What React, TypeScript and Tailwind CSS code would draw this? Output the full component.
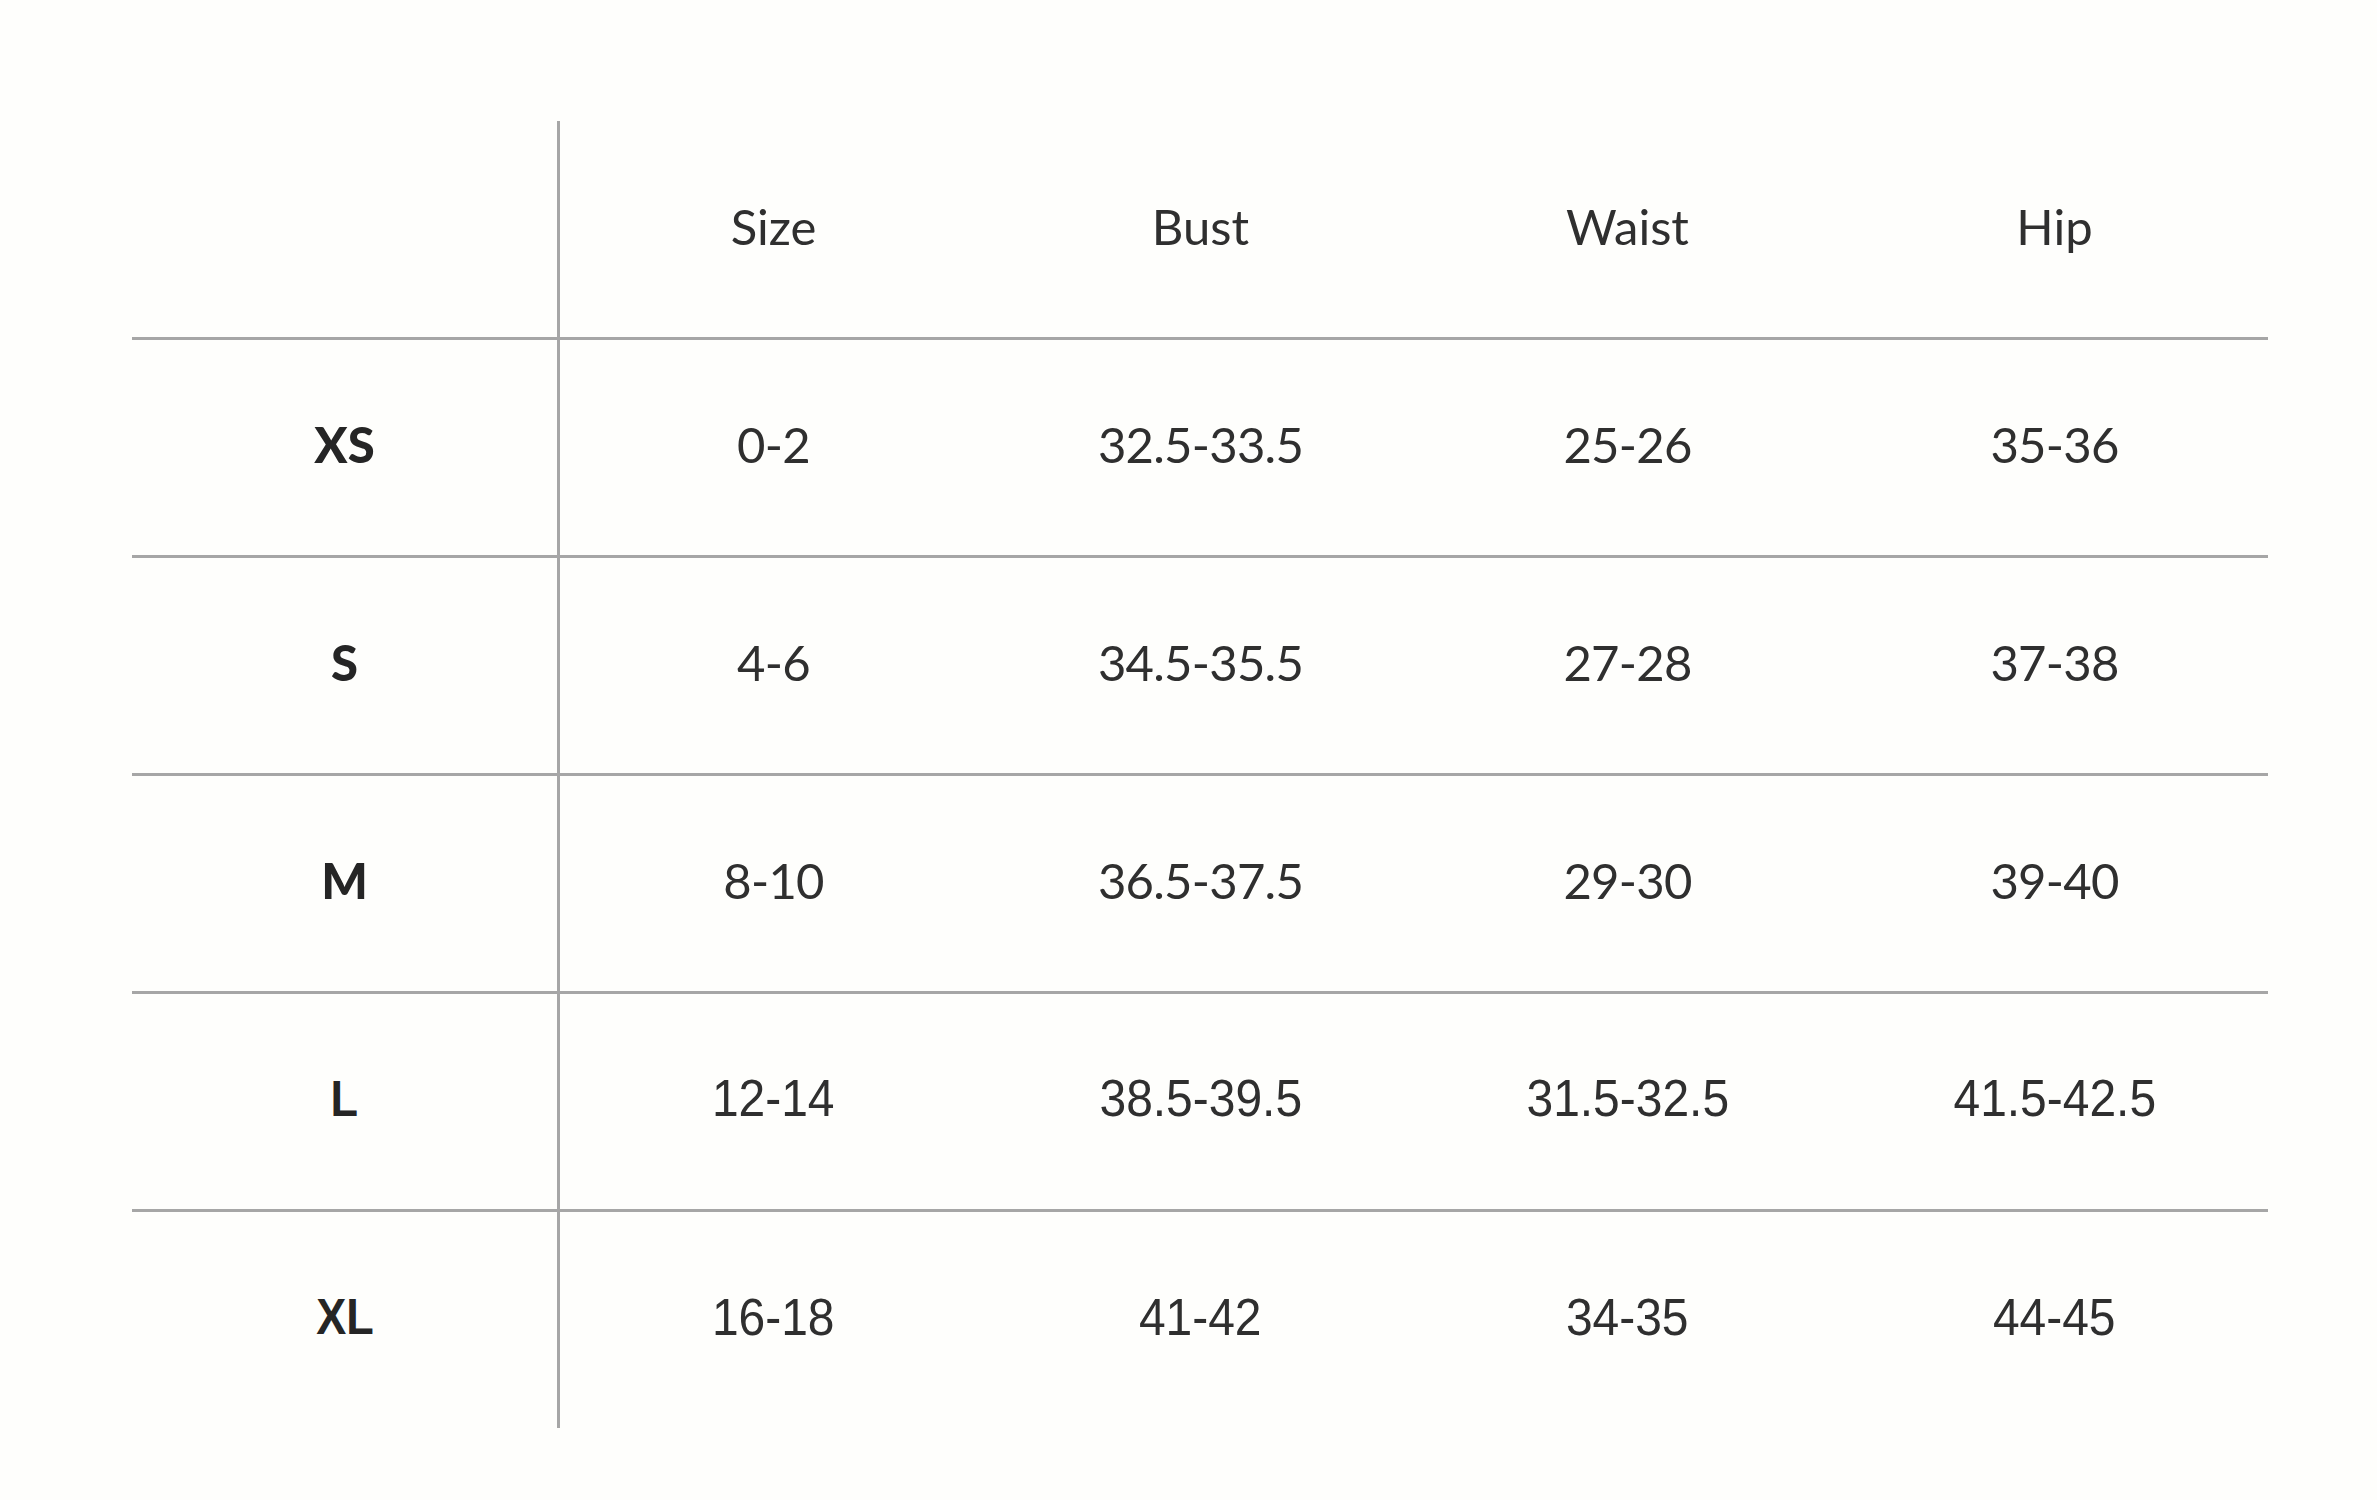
const columns = ["Size", "Bust", "Waist", "Hip"];

type Row = {
  label: string;
  values: string[];
  // the last two rows in the chart were set in a narrow grotesque, not the geometric face
  narrow?: boolean;
};

const rows: Row[] = [
  { label: "XS", values: ["0-2", "32.5-33.5", "25-26", "35-36"] },
  { label: "S", values: ["4-6", "34.5-35.5", "27-28", "37-38"] },
  { label: "M", values: ["8-10", "36.5-37.5", "29-30", "39-40"] },
  { label: "L", values: ["12-14", "38.5-39.5", "31.5-32.5", "41.5-42.5"], narrow: true },
  { label: "XL", values: ["16-18", "41-42", "34-35", "44-45"], narrow: true },
];

export default function App() {
  return (
    <main className="min-h-screen bg-[#fefefc] pl-[132px] pt-[121px] font-['Lato',sans-serif] text-[#2f2f2f]">
      <div className="w-[2136px]">
        {/* Header */}
        <div className="flex h-[219px] border-b-[3px] border-[#a6a6a6]">
          <div className="w-[428px] shrink-0 border-r-[3px] border-[#a6a6a6]" />
          {columns.map((c) => (
            <div key={c} className="flex flex-1 items-center justify-center pb-[6px] text-[49px] leading-none">
              {c}
            </div>
          ))}
        </div>

        {rows.map((row, i) => (
          <SizeRow key={row.label} row={row} last={i === rows.length - 1} />
        ))}
      </div>
    </main>
  );
}

function SizeRow({ row, last }: { row: Row; last: boolean }) {
  return (
    <div
      className={
        last ? "flex h-[216px]" : "flex h-[218px] border-b-[3px] border-[#a6a6a6]"
      }
    >
      <div className="flex w-[428px] shrink-0 items-center justify-center border-r-[3px] border-[#a6a6a6] pb-[6px]">
        {row.narrow ? (
          <span className="inline-block scale-x-[0.9] font-['Liberation_Sans',Arial,sans-serif] text-[50px] font-bold leading-none text-[#252525]">
            {row.label}
          </span>
        ) : (
          <span className="text-[49px] font-black leading-none text-[#252525]">{row.label}</span>
        )}
      </div>
      {row.values.map((v, j) => (
        <div key={j} className="flex flex-1 items-center justify-center pb-[6px]">
          {row.narrow ? (
            <span className="inline-block scale-x-[0.94] font-['Liberation_Sans',Arial,sans-serif] text-[51px] leading-none">
              {v}
            </span>
          ) : (
            <span className="text-[49px] leading-none tracking-[-0.015em]">{v}</span>
          )}
        </div>
      ))}
    </div>
  );
}
